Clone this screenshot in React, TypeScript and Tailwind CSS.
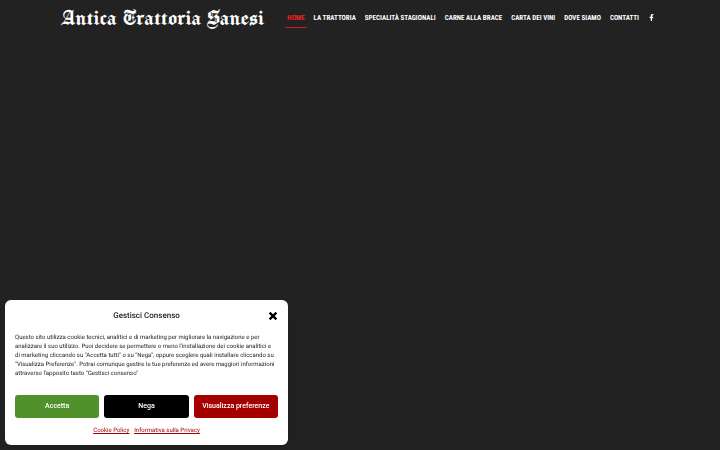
import { FaFacebookF } from "react-icons/fa";

const links = [
  "La Trattoria",
  "Specialità stagionali",
  "Carne alla brace",
  "Carta dei vini",
  "Dove siamo",
  "Contatti",
];

const Header = () => {
  return (
    <header className="flex items-start justify-between pl-[60px] pr-[65px]">
      <a href="#" className="mt-1 whitespace-nowrap font-['Manufacturing_Consent','UnifrakturCook',serif] text-[24px] leading-[28px] text-white">
        Antica Trattoria Sanesi
      </a>
      <nav className="flex items-start gap-[9px] whitespace-nowrap font-['Roboto_Condensed',Roboto,sans-serif] text-[7px] leading-[8px] font-bold uppercase text-white">
        <a href="#" className="-mx-[2px] border-b border-[#d01c1c] px-[2px] pt-[14px] pb-[5px] text-[#f02222]">
          Home
        </a>
        {links.map((link) => (
          <a key={link} href="#" className="pt-[14px]">
            {link}
          </a>
        ))}
        <a href="#" aria-label="Facebook" className="pt-[14px]">
          <FaFacebookF className="size-[7px]" />
        </a>
      </nav>
    </header>
  );
};

const CookieBanner = () => {
  return (
    <section
      aria-labelledby="consent-title"
      className="fixed bottom-[5px] left-[5px] w-[283px] rounded-md bg-white px-[10px] pt-[11px] pb-[10px] text-[#222222] shadow-lg"
    >
      <div className="grid grid-cols-[10px_1fr_10px] items-center">
        <h2 id="consent-title" className="col-start-2 text-center text-[8px] leading-[10px] font-medium">
          Gestisci Consenso
        </h2>
        <button type="button" aria-label="Chiudi" className="cursor-pointer">
          <svg viewBox="0 0 10 10" className="size-[10px]" fill="none" stroke="#000" strokeWidth="2.3">
            <path d="M1.6 1.6 8.4 8.4M8.4 1.6 1.6 8.4" />
          </svg>
        </button>
      </div>
      <p className="mt-[12px] pr-[2px] text-[6px] leading-[9px]">
        Questo sito utilizza cookie tecnici, analitici e di marketing per migliorare la navigazione e per
        analizzare il suo utilizzo. Puoi decidere se permettere o meno l'installazione dei cookie analitici e
        di marketing cliccando su "Accetta tutti" o su "Nega", oppure sceglere quali installare cliccando su
        "Visualizza Preferenze". Potrai comunque gestire le tue preferenze ed avere maggiori informazioni
        attraverso l'apposito tasto "Gestisci consenso"
      </p>
      <div className="mt-[17px] grid grid-cols-3 gap-[5px] text-[7px] leading-[9px] font-medium whitespace-nowrap text-white">
        <button type="button" className="h-[23px] cursor-pointer rounded-[3px] bg-[#51912b]">
          Accetta
        </button>
        <button type="button" className="h-[23px] cursor-pointer rounded-[3px] bg-black">
          Nega
        </button>
        <button type="button" className="h-[23px] cursor-pointer rounded-[3px] bg-[#a50000]">
          Visualizza preferenze
        </button>
      </div>
      <div className="mt-[8px] flex justify-center gap-[5px] text-[6px] leading-[9px] text-[#a50000] underline">
        <a href="#">Cookie Policy</a>
        <a href="#">Informativa sulla Privacy</a>
      </div>
    </section>
  );
};

const App = () => {
  return (
    <div className="min-h-screen bg-[#222222] font-[Roboto,sans-serif] [text-rendering:geometricPrecision]">
      <Header />
      <CookieBanner />
    </div>
  );
};

export default App;
